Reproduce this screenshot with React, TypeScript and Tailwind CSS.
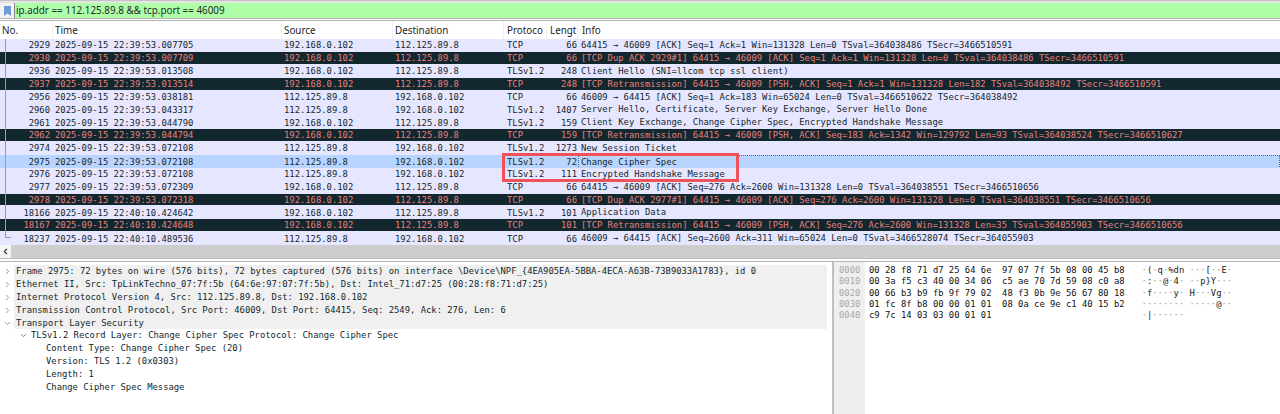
import { ChevronDown, ChevronLeft, ChevronRight } from "lucide-react";

const mono = "font-['DejaVu_Sans_Mono','Liberation_Mono',monospace] text-[8.85px]";
const ui = "font-['Noto_Sans','Open_Sans',sans-serif] text-[9.85px]";
const columns = "grid grid-cols-[53px_229px_111px_111px_43px_31px_1fr]";

const A = "192.168.0.102";
const B = "112.125.89.8";

const packets = [
  ["2929", "07705", A, B, "TCP", "66", "64415 → 46009 [ACK] Seq=1 Ack=1 Win=131328 Len=0 TSval=364038486 TSecr=3466510591"],
  ["2930", "07709", A, B, "TCP", "66", "[TCP Dup ACK 2929#1] 64415 → 46009 [ACK] Seq=1 Ack=1 Win=131328 Len=0 TSval=364038486 TSecr=3466510591", "dark"],
  ["2936", "13508", A, B, "TLSv1.2", "248", "Client Hello (SNI=llcom tcp ssl client)"],
  ["2937", "13514", A, B, "TCP", "248", "[TCP Retransmission] 64415 → 46009 [PSH, ACK] Seq=1 Ack=1 Win=131328 Len=182 TSval=364038492 TSecr=3466510591", "dark"],
  ["2956", "38181", B, A, "TCP", "66", "46009 → 64415 [ACK] Seq=1 Ack=183 Win=65024 Len=0 TSval=3466510622 TSecr=364038492"],
  ["2960", "43317", B, A, "TLSv1.2", "1407", "Server Hello, Certificate, Server Key Exchange, Server Hello Done"],
  ["2961", "44790", A, B, "TLSv1.2", "159", "Client Key Exchange, Change Cipher Spec, Encrypted Handshake Message"],
  ["2962", "44794", A, B, "TCP", "159", "[TCP Retransmission] 64415 → 46009 [PSH, ACK] Seq=183 Ack=1342 Win=129792 Len=93 TSval=364038524 TSecr=3466510627", "dark"],
  ["2974", "72108", B, A, "TLSv1.2", "1273", "New Session Ticket"],
  ["2975", "72108", B, A, "TLSv1.2", "72", "Change Cipher Spec", "selected"],
  ["2976", "72108", B, A, "TLSv1.2", "111", "Encrypted Handshake Message"],
  ["2977", "72309", A, B, "TCP", "66", "64415 → 46009 [ACK] Seq=276 Ack=2600 Win=131328 Len=0 TSval=364038551 TSecr=3466510656"],
  ["2978", "72318", A, B, "TCP", "66", "[TCP Dup ACK 2977#1] 64415 → 46009 [ACK] Seq=276 Ack=2600 Win=131328 Len=0 TSval=364038551 TSecr=3466510656", "dark"],
  ["18166", "t424642", A, B, "TLSv1.2", "101", "Application Data"],
  ["18167", "t424648", A, B, "TCP", "101", "[TCP Retransmission] 64415 → 46009 [PSH, ACK] Seq=276 Ack=2600 Win=131328 Len=35 TSval=364055903 TSecr=3466510656", "dark"],
  ["18237", "t489536", B, A, "TCP", "66", "46009 → 64415 [ACK] Seq=2600 Ack=311 Win=65024 Len=0 TSval=3466528074 TSecr=364055903"],
];

const details = [
  { text: "Frame 2975: 72 bytes on wire (576 bits), 72 bytes captured (576 bits) on interface \\Device\\NPF_{4EA905EA-5BBA-4ECA-A63B-73B9033A1783}, id 0", open: false },
  { text: "Ethernet II, Src: TpLinkTechno_07:7f:5b (64:6e:97:07:7f:5b), Dst: Intel_71:d7:25 (00:28:f8:71:d7:25)", open: false },
  { text: "Internet Protocol Version 4, Src: 112.125.89.8, Dst: 192.168.0.102", open: false },
  { text: "Transmission Control Protocol, Src Port: 46009, Dst Port: 64415, Seq: 2549, Ack: 276, Len: 6", open: false },
  { text: "Transport Layer Security", open: true },
];

const record = ["Content Type: Change Cipher Spec (20)", "Version: TLS 1.2 (0x0303)", "Length: 1", "Change Cipher Spec Message"];

const hexRows = [
  ["0000", "00 28 f8 71 d7 25 64 6e  97 07 7f 5b 08 00 45 b8", "·(·q·%dn ···[··E·"],
  ["0010", "00 3a f5 c3 40 00 34 06  c5 ae 70 7d 59 08 c0 a8", "·:··@·4· ··p}Y···"],
  ["0020", "00 66 b3 b9 fb 9f 79 02  48 f3 0b 9e 56 67 80 18", "·f····y· H···Vg··"],
  ["0030", "01 fc 8f b8 00 00 01 01  08 0a ce 9e c1 40 15 b2", "········ ·····@··"],
  ["0040", "c9 7c 14 03 03 00 01 01", "·|······"],
];

const PacketRow = ({ row }: { row: string[] }) => {
  const [no, time, src, dst, proto, len, info, kind] = row;
  const stamp = time.startsWith("t") ? `22:40:10.${time.slice(1)}` : `22:39:53.0${time}`;
  const tone =
    kind === "dark"
      ? "bg-[#12272e] text-[#e8807c] border-b border-[#e7e6ff]"
      : kind === "selected"
        ? "bg-[#b8d4ff] text-[#12272e]"
        : "bg-[#e7e6ff] text-[#12272e]";
  return (
    <div className={`${columns} ${tone} h-[12.88px] items-center leading-[12px] whitespace-pre overflow-hidden`}>
      <span className="text-right pr-[3px]">{no}</span>
      <span className="pl-[2px]">2025-09-15 {stamp}</span>
      <span className="pl-[2px]">{src}</span>
      <span className="pl-[2px]">{dst}</span>
      <span className="pl-[3px]">{proto}</span>
      <span className="text-right pr-[1px]">{len}</span>
      <span className={`h-full ${kind === "selected" ? "border border-dotted border-[#5a6a80] pl-[2px]" : "pl-[3px]"}`}>{info}</span>
    </div>
  );
};

const Ascii = ({ text }: { text: string }) => (
  <span>
    {text.split("").map((c, i) => (
      <span key={i} className={c === "·" ? "text-[#9a9a9a]" : ""}>
        {c}
      </span>
    ))}
  </span>
);

const App = () => {
  return (
    <div className="w-[1280px] h-[414px] bg-white flex flex-col overflow-hidden text-[#12272e]">
      <div className="h-[3px] bg-[#e4e4e4] border-t border-[#c4c4c4]" />
      <div className="h-[15px] flex items-stretch">
        <div className="w-[14px] flex items-center justify-center bg-[#f2f2f2]">
          <svg width="7" height="10" viewBox="0 0 7 10">
            <path d="M0 0H7V10L3.5 7.5L0 10Z" fill="#6f9bd8" />
          </svg>
        </div>
        <div className={`${ui} flex-1 bg-[#afffa9] border-l border-[#8a8a8a] pl-[1px] leading-[14px] text-[#1c2a2a]`}>
          ip.addr == 112.125.89.8 &amp;&amp; tcp.port == 46009
        </div>
      </div>
      <div className="h-[3px] bg-white border-y border-[#b4b4b4]" />

      <div className={`${ui} ${columns} h-[18px] items-center text-[#222] bg-white whitespace-nowrap`}>
        <span className="pl-[2px] h-full leading-[18px] border-r border-[#f0f0f0]">No.</span>
        <span className="pl-[2px] h-full leading-[18px] border-r border-[#f0f0f0]">Time</span>
        <span className="pl-[2px] h-full leading-[18px] border-r border-[#f0f0f0]">Source</span>
        <span className="pl-[2px] h-full leading-[18px] border-r border-[#f0f0f0]">Destination</span>
        <span className="pl-[3px] h-full leading-[18px] border-r border-[#f0f0f0]">Protoco</span>
        <span className="pl-[3px] h-full leading-[18px] border-r border-[#f0f0f0]">Lengt</span>
        <span className="pl-[4px] h-full leading-[18px]">Info</span>
      </div>

      <div className={`${mono} relative`}>
        {packets.map((p) => (
          <PacketRow key={p[0]} row={p} />
        ))}
        <div className="absolute left-[5px] top-0 h-[199px] w-[6px] border-l border-b border-[#9c9c9c]" />
        <div className="absolute left-[502px] top-[114px] w-[237px] h-[29px] border-[3px] border-[#f0525a]" />
      </div>

      <div className="h-[13px] bg-[#cdcdcd] flex">
        <div className="w-[11px] bg-[#f4f4f4] flex items-center justify-center">
          <ChevronLeft size={9} strokeWidth={3} color="#333" />
        </div>
      </div>
      <div className="h-[3px] bg-white border-t border-[#bdbdbd]" />
      <div className="h-[1px] bg-[#b4b4b4]" />

      <div className={`${mono} flex flex-1 min-h-0 leading-[12.9px] whitespace-pre`}>
        <div className="w-[827px] overflow-hidden pt-[3px] shrink-0">
          {details.map((d) => (
            <div key={d.text} className="flex h-[12.9px] items-center">
              <span className="w-[14px] flex justify-center text-[#777]">
                {d.open ? <ChevronDown size={9} strokeWidth={2} /> : <ChevronRight size={9} strokeWidth={2} />}
              </span>
              <span className="flex-1 bg-[#f0f0f0] pl-[2px]">{d.text}</span>
            </div>
          ))}
          <div className="flex h-[12.9px] items-center pl-[16px]">
            <span className="w-[15px] flex justify-center text-[#555]">
              <ChevronDown size={9} strokeWidth={2} />
            </span>
            <span>TLSv1.2 Record Layer: Change Cipher Spec Protocol: Change Cipher Spec</span>
          </div>
          {record.map((r) => (
            <div key={r} className="h-[12.9px] pl-[46px]">
              {r}
            </div>
          ))}
        </div>

        <div className="flex-1 ml-[5px] border-l-[2px] border-[#c0c0c0] flex min-w-0">
          <div className="w-[31px] bg-[#efefef] pt-[3px] pl-[5px] leading-[11.35px] text-[#a8a8a8]">
            {hexRows.map((h) => (
              <div key={h[0]} className="h-[11.35px]">
                {h[0]}
              </div>
            ))}
          </div>
          <div className="pt-[3px] pl-[4px] leading-[11.35px] text-[#111]">
            {hexRows.map((h) => (
              <div key={h[0]} className="h-[11.35px]">
                {h[1]}
              </div>
            ))}
          </div>
          <div className="ml-[17px] pt-[3px] leading-[11.35px] text-[#222]">
            {hexRows.map((h) => (
              <div key={h[0]} className="h-[11.35px]">
                <Ascii text={h[2]} />
              </div>
            ))}
          </div>
        </div>
      </div>
    </div>
  );
};

export default App;
